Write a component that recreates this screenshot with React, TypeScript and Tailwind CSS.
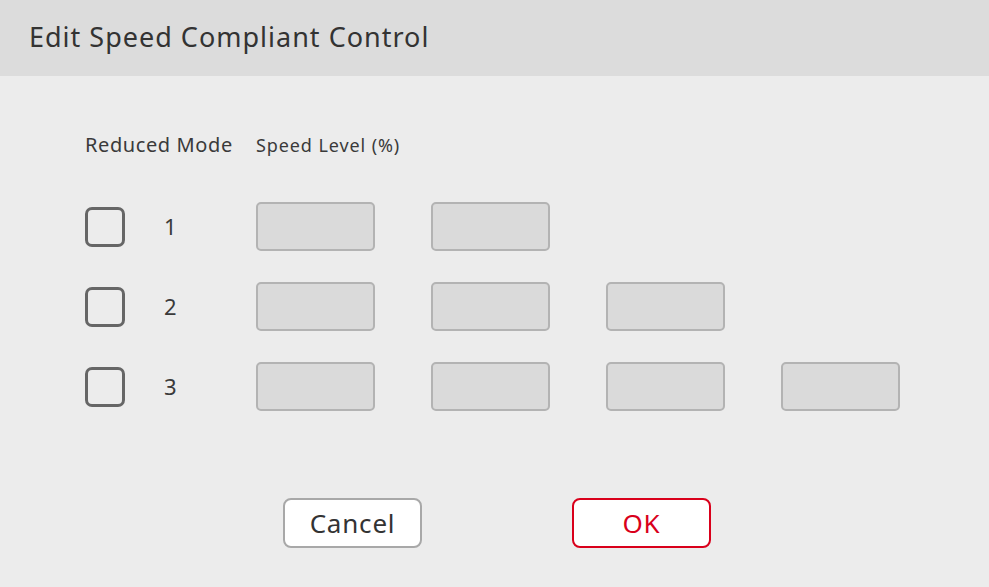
import React from 'react';

const rows = [1, 2, 3];

const SpeedInput: React.FC = () => (
  <div className="w-[119px] h-[49px] rounded-[5px] border-2 border-[#b3b3b3] bg-[#dadada]" />
);

const App: React.FC = () => {
  return (
    <div className="w-[989px] h-[587px] bg-[#ececec] flex flex-col text-[#3a3a3a]" style={{ fontFamily: '"Noto Sans", Lato, sans-serif' }}>
      <div className="h-[76px] bg-[#dcdcdc] flex items-center pl-[29px] pb-[2px]">
        <h1 className="text-[27px] tracking-[1px] text-[#333333]">Edit Speed Compliant Control</h1>
      </div>

      <div className="pl-[85px] pt-[56px]">
        <div className="flex items-center h-[26px]">
          <span className="w-[171px] text-[20px] tracking-[0.6px]">Reduced Mode</span>
          <span className="text-[18px] tracking-[0.9px]">Speed Level (%)</span>
        </div>

        <div className="mt-[44px] flex flex-col gap-[31px]">
          {rows.map((n) => (
            <div key={n} className="flex items-center h-[49px]">
              <div className="w-[40px] h-[40px] rounded-[7px] border-[3px] border-[#666666]" />
              <span className="ml-[39px] w-[92px] text-[22px]">{n}</span>
              <div className="flex gap-[56px]">
                {Array.from({ length: n + 1 }).map((_, i) => (
                  <SpeedInput key={i} />
                ))}
              </div>
            </div>
          ))}
        </div>
      </div>

      <div className="mt-[87px] flex pl-[283px] gap-[150px]">
        <button className="w-[139px] h-[50px] rounded-[8px] border-2 border-[#a8a8a8] bg-white text-[26px] tracking-[0.8px] text-[#333333]">
          Cancel
        </button>
        <button className="w-[139px] h-[50px] rounded-[8px] border-2 border-[#d9001b] bg-white text-[26px] tracking-[0.8px] text-[#d9001b]">
          OK
        </button>
      </div>
    </div>
  );
};

export default App;
